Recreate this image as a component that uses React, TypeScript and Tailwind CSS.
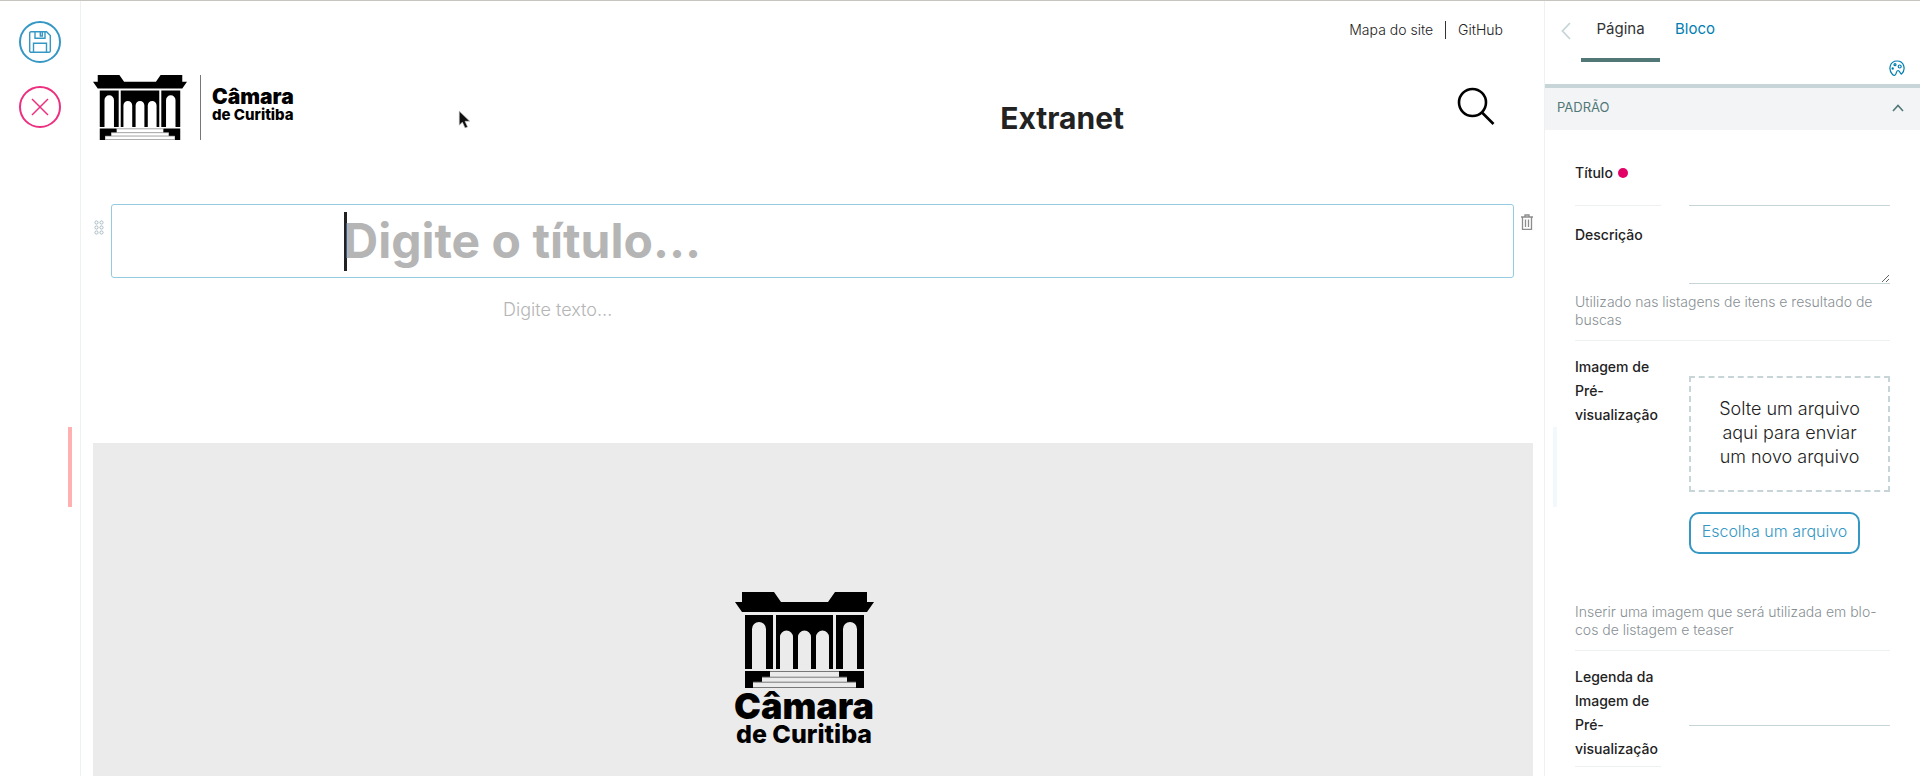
import React from "react";

function Building({ className }: { className: string }) {
  return (
    <svg viewBox="0 0 139 96" className={className} aria-hidden="true">
      <path d="M7 0H39L46 10H93L100 0H132V10H139L132 20H7L0 10H7Z" />
      <path
        fillRule="evenodd"
        d="M10 23H38V77H10ZM17 77H31V37A7 7 0 0 0 17 37Z M41 23H98V77H41ZM45 77H58V45A6.500 6.500 0 0 0 45 45ZM63 77H76V45A6.500 6.500 0 0 0 63 45ZM81 77H94V45A6.500 6.500 0 0 0 81 45Z M101 23H129V77H101ZM108 77H122V37A7 7 0 0 0 108 37Z"
      />
      <path d="M10 79H35V85H27V90H18V96H10ZM129 79H104V85H112V90H121V96H129Z" />
      <path d="M35 79.500H104M27 85.200H112M18 90.200H121M18 95.500H121" stroke="#777" strokeWidth="1" />
    </svg>
  );
}

function Field({ id, label, required, children }: { id: string; label: React.ReactNode; required?: boolean; children: React.ReactNode }) {
  return (
    <div className="flex justify-between">
      <div className="w-[86px] shrink-0 text-sm leading-6 font-medium text-[#222]">
        <label htmlFor={id}>{label}</label>
        {required && <span className="ml-[5px] inline-block size-2.5 rounded-full bg-[#e40166]" />}
      </div>
      <div className="w-[201px] shrink-0">{children}</div>
    </div>
  );
}

const help = "text-sm leading-[18px] font-light text-[#878f93] whitespace-nowrap";

export default function App() {
  return (
    <div className="flex h-screen overflow-hidden border-t border-[#c8c4bf] bg-white font-['Inter',sans-serif] text-[#222]">
      <aside className="relative flex w-[81px] shrink-0 flex-col items-center gap-[23px] border-r border-[#edf1f2] pt-5">
        <button aria-label="Salvar" className="flex size-[42px] items-center justify-center rounded-full border-2 border-[#3597c4] text-[#3597c4]">
          <svg viewBox="0 0 22 22" className="size-[22px]" fill="none" stroke="currentColor" strokeWidth="1.400">
            <path d="M2 .7H17.500L21.300 4.500V20A1.300 1.300 0 0 1 20 21.300H2A1.300 1.300 0 0 1 .7 20V2A1.300 1.300 0 0 1 2 .7ZM6 1V7.300H16V1M11.300 1V5H13.300V1M4.500 21V12.300H17.500V21" />
          </svg>
        </button>
        <button aria-label="Cancelar" className="flex size-[42px] items-center justify-center rounded-full border-2 border-[#ec2f7f] text-[#ec2f7f]">
          <svg viewBox="0 0 18 18" className="size-[18px]" fill="none" stroke="currentColor" strokeWidth="1.500">
            <path d="M1 1L17 17M17 1L1 17" />
          </svg>
        </button>
        <span className="absolute top-[426px] right-2 h-20 w-1 bg-[#ffb0b0]" />
      </aside>

      <main className="flex min-w-0 flex-1 flex-col pr-[11px] pl-3">
        <nav className="flex h-[58px] items-center justify-end gap-3 pr-[30px] text-sm font-light">
          <a href="#mapa">Mapa do site</a>
          <span className="h-[18px] w-px bg-[#333]" />
          <a href="#github">GitHub</a>
        </nav>
        <header className="flex h-[145px] items-start justify-between pt-4 pr-[38px]">
          <a href="#inicio" aria-label="Câmara de Curitiba" className="flex h-[65px] text-black">
            <Building className="h-[65px] w-[94px]" />
            <span className="ml-[13px] h-full w-px bg-[#777]" />
            <span className="ml-[11px] flex flex-col pt-3">
              <span className="text-[21px] leading-5 font-black">Câmara</span>
              <span className="text-[15px] leading-4 font-extrabold">de Curitiba</span>
            </span>
          </a>
          <div className="flex">
            <a href="#extranet" className="mt-[23px] mr-[333px] text-3xl leading-10 font-bold">Extranet</a>
            <button aria-label="Buscar" className="mt-3 h-[38px]">
              <svg viewBox="0 0 38 38" className="size-[38px]" fill="none" stroke="#000" strokeWidth="2.600">
                <circle cx="15.500" cy="15.500" r="13.500" />
                <path d="M25 25.500L36.500 37" />
              </svg>
            </button>
          </div>
        </header>

        <section className="relative mr-[19px] ml-[18px] h-[74px] rounded-[3px] border border-[#94cbe0]">
          <button aria-label="Mover bloco" className="absolute top-[15px] -left-[18px]">
            <svg viewBox="0 0 10 15" className="h-[15px] w-2.5" fill="none" stroke="#a9bcc2">
              {[2.5, 7.5, 12.5].map((y) => (
                <g key={y}>
                  <circle cx="2.500" cy={y} r="1.600" />
                  <circle cx="7.500" cy={y} r="1.600" />
                </g>
              ))}
            </svg>
          </button>
          <div className="mx-auto flex h-full max-w-[938px] items-center">
            <span className="-mr-[3px] h-[59px] w-[3px] bg-[#222]" />
            <h1 className="text-5xl leading-none font-bold text-[#b5b5b5]">Digite o título…</h1>
          </div>
          <button aria-label="Excluir bloco" className="absolute top-[9px] -right-5">
            <svg viewBox="0 0 12 16" className="h-4 w-3" fill="none" stroke="#8c8c8c">
              <path d="M0 3H12M4 2.500V1H8V2.500M1.500 3.500V15.300H10.500V3.500M4.500 5.500V13M7.500 5.500V13" strokeWidth="1.300" />
            </svg>
          </button>
        </section>
        <p className="mx-auto mt-4 w-full max-w-[620px] text-lg leading-8 font-light text-[#b5b5b5]">Digite texto…</p>

        <footer className="mt-[117px] flex flex-1 flex-col items-center bg-[#ebebeb] pt-[149px] pr-[18px] text-black">
          <Building className="h-[96px] w-[139px]" />
          <span className="text-[36px] leading-9 font-black">Câmara</span>
          <span className="-mt-0.5 text-[25px] leading-6 font-extrabold">de Curitiba</span>
        </footer>
      </main>

      <aside className="relative w-[376px] shrink-0 border-l border-[#edf1f2]">
        <span className="absolute top-[426px] left-2 h-20 w-1 bg-[#f3f8fd]" />
        <div className="relative flex h-[87px] items-start border-b-4 border-[#c7d5d8] text-[15px]">
          <button aria-label="Voltar" className="mt-[21px] ml-4">
            <svg viewBox="0 0 10 18" className="h-[18px] w-2.5" fill="none" stroke="#c7d5d8" strokeWidth="1.800">
              <path d="M9 1L1.500 9L9 17" />
            </svg>
          </button>
          <button className="ml-2.5 h-[61px] w-[79px] border-b-4 border-[#517776] pb-0.5 leading-10 text-[#333]">Página</button>
          <button className="ml-[15px] h-[61px] pb-1.5 leading-10 text-[#007eb1]">Bloco</button>
          <button aria-label="Estilos" className="absolute right-[15px] bottom-2 text-[#007eb1]">
            <svg viewBox="0 0 16 16" className="size-4" fill="none" stroke="currentColor" strokeWidth="1.200">
              <path d="M3.500 14.500C-1 10 .5 1 8 1S17 10 12.500 14C11.300 14.500 11.500 11 9 10.500C6.500 10.500 8 15.500 5.500 15.300C4.700 15.300 4 15 3.500 14.500Z" />
              <circle cx="3.700" cy="8.500" r=".6" />
              <circle cx="6" cy="4.700" r="1" />
              <circle cx="10.700" cy="6.500" r="1.500" />
            </svg>
          </button>
        </div>
        <button className="flex h-[42px] w-full items-center justify-between bg-[#f2f4f6] pr-4 pb-0.5 pl-3 text-[13px] text-[#517776]">
          <span>PADRÃO</span>
          <svg viewBox="0 0 12 8" className="h-2 w-3" fill="none" stroke="currentColor" strokeWidth="1.600">
            <path d="M1 7L6 1.500L11 7" />
          </svg>
        </button>

        <form className="pt-[31px] pr-[30px] pl-[30px]">
          <Field id="titulo" label="Título" required>
            <input id="titulo" className="block h-[45px] w-full border-b border-[#c7d5d8] outline-none" />
          </Field>
          <div className="-mt-px w-[86px] border-b border-[#edf1f2]" />
          <div className="mt-[17px]">
            <Field id="descricao" label="Descrição">
              <textarea id="descricao" className="block h-[61px] w-full border-b border-[#c7d5d8] outline-none" />
            </Field>
            <p className={`mt-[9px] border-b border-[#edf1f2] pb-[11px] ${help}`}>
              Utilizado nas listagens de itens e resultado de
              <br />
              buscas
            </p>
          </div>
          <div className="mt-[14px]">
            <Field id="imagem" label={<>Imagem de<br />Pré-<br />visualização</>}>
              <div className="mt-[21px] flex h-[116px] items-center justify-center border-2 border-dashed border-[#c7d5d8] pb-0.5 text-center text-lg leading-6 font-light text-[#222]">
                <p>Solte um arquivo<br />aqui para enviar<br />um novo arquivo</p>
              </div>
              <button id="imagem" type="button" className="mt-5 h-[42px] w-[171px] rounded-[10px] border-2 border-[#3597c4] pb-1 text-base font-light whitespace-nowrap text-[#3597c4]">
                Escolha um arquivo
              </button>
            </Field>
            <p className={`mt-[49px] border-b border-[#edf1f2] pb-[11px] ${help}`}>
              Inserir uma imagem que será utilizada em blo-
              <br />
              cos de listagem e teaser
            </p>
          </div>
          <div className="mt-[14px]">
            <Field id="legenda" label={<>Legenda da<br />Imagem de<br />Pré-<br />visualização</>}>
              <input id="legenda" className="mt-5 block h-[41px] w-full border-b border-[#c7d5d8] outline-none" />
            </Field>
            <div className="mt-[5px] w-[86px] border-b border-[#edf1f2]" />
          </div>
        </form>
      </aside>

      <svg viewBox="0 0 12 18" className="absolute top-[110px] left-[458px] h-[19px] w-[13px]" aria-hidden="true">
        <path d="M1 1V14.500L4 11.500L6.500 17L9 16L6.500 10.700H11Z" fill="#111" stroke="#ccc" strokeWidth=".6" />
      </svg>
    </div>
  );
}
